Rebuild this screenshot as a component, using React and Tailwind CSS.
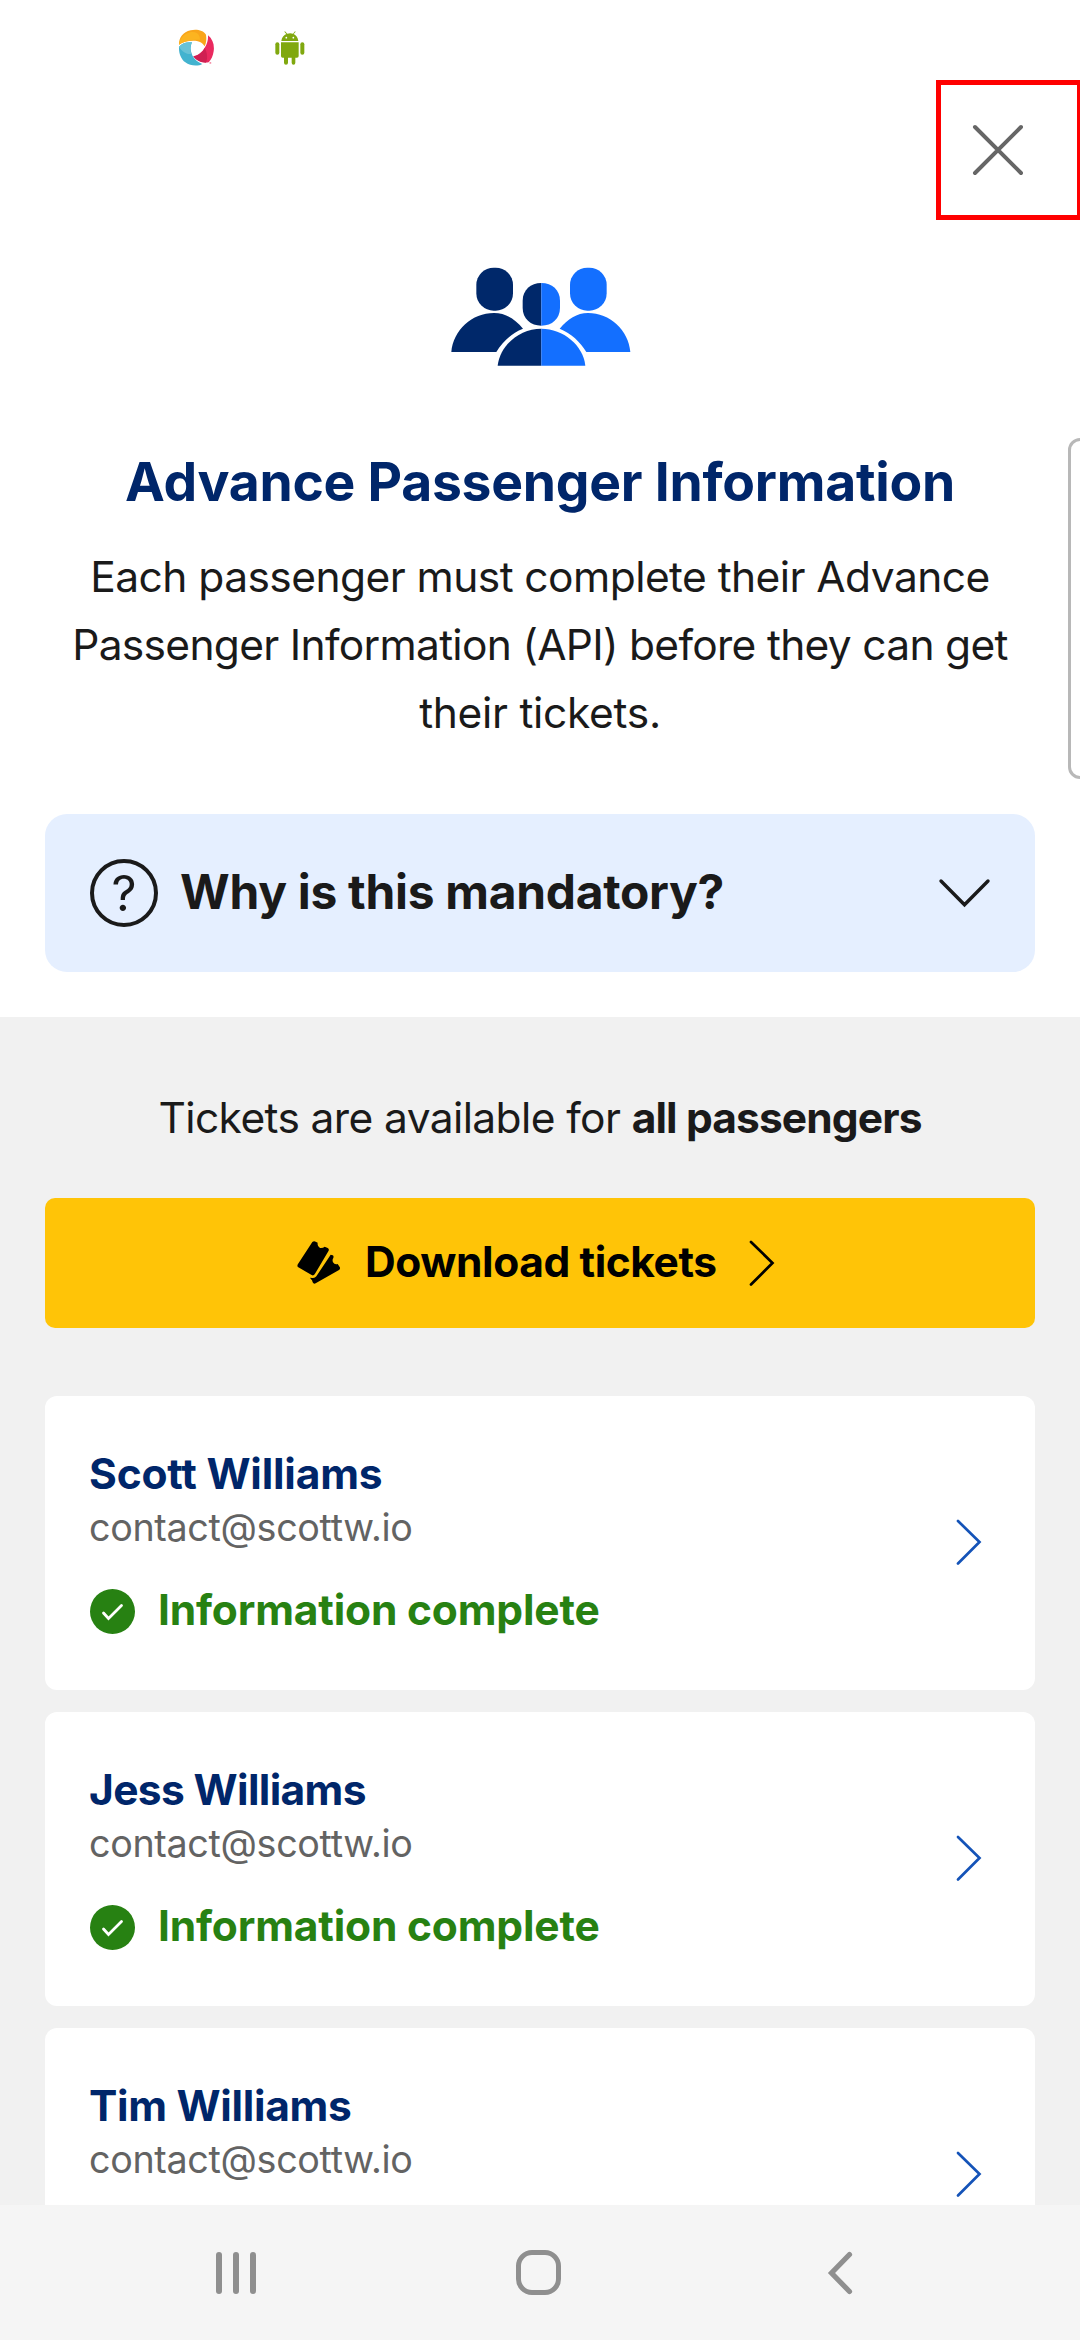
import React from "react";

const passengers = [
  { name: "Scott Williams", tracking: "tracking-[-0.19px]" },
  { name: "Jess Williams", tracking: "tracking-[-0.65px]" },
  { name: "Tim Williams", tracking: "tracking-[-0.3px]" },
];

function SwirlLogo() {
  return (
    <svg width="36" height="37" viewBox="84 57 108 111" className="shrink-0">
      <path d="M87 104C86 84 99 66 122 61C140 57 160 61 168 74C170 88 169 99 164 109C157 97 145 92 130 92C113 92 98 96 87 104Z" fill="#f9a51a" />
      <path d="M87 104C90 84 104 70 123 66C140 64 150 72 150 90C130 88 102 94 87 104Z" fill="#fcb420" />
      <path d="M174 76C188 87 194 105 191 124C189 138 184 149 176 157C158 160 140 153 130 139C145 137 158 125 165 112C172 100 175 88 174 76Z" fill="#ea2a5f" />
      <path d="M130 139C146 137 158 126 164 114C172 128 174 144 168 158C152 158 139 151 130 139Z" fill="#cf2052" />
      <path d="M87 110C97 99 111 95 126 97C120 110 121 124 128 138C134 149 144 157 157 162C144 170 120 168 106 157C93 147 86 130 87 110Z" fill="#43b3cf" />
      <path d="M87 110C97 99 111 95 126 97C119 110 120 121 125 132C111 134 97 126 87 110Z" fill="#68c2d6" />
      <path d="M179 155L185 159L179 162Z" fill="#f06a8a" />
    </svg>
  );
}

function AndroidLogo() {
  return (
    <svg width="30" height="35" viewBox="377 64 90 105" className="shrink-0" fill="#80a80f">
      <path d="M396 94C397 83 404 76 411 73L405 66L407 65L414 72C419 70 426 70 431 72L437 65L439 66L433 73C441 77 446 84 447 94Z" />
      <path d="M395 98H448V139Q448 144 443 144H438V159Q438 165 432.500 165Q427 165 427 159V144H416V159Q416 165 410 165Q404 165 404 159V144H400Q395 144 395 139Z" />
      <rect x="378" y="98" width="12" height="37" rx="6" />
      <rect x="453" y="98" width="12" height="37" rx="6" />
      <circle cx="411" cy="84" r="2.600" fill="#fff" />
      <circle cx="432" cy="84" r="2.600" fill="#fff" />
    </svg>
  );
}

function PeopleIcon() {
  return (
    <svg width="220" height="130" viewBox="0 0 660 390">
      <rect x="139" y="53" width="110" height="129" rx="52" fill="#00286a" />
      <path d="M64 306C70 240 126 189 192 189C226 189 255 206 279 236C244 250 218 275 199 306Z" fill="#00286a" />
      <rect x="420" y="53" width="110" height="129" rx="52" fill="#136fff" />
      <path d="M601 306C596 240 539 189 474 189C441 189 413 207 389 236C424 250 450 275 469 306Z" fill="#136fff" />
      <path d="M334 99C302 99 278 120 278 152V174C278 206 302 227 334 227Z" fill="#00286a" />
      <path d="M334 99C366 99 390 120 390 152V174C390 206 366 227 334 227Z" fill="#136fff" />
      <path d="M334 236C268 236 210 286 203 347H334Z" fill="#00286a" />
      <path d="M334 236C400 236 460 286 466 347H334Z" fill="#136fff" />
    </svg>
  );
}

function TicketIcon() {
  return (
    <svg width="44" height="44" viewBox="80 96 132 132" className="shrink-0">
      <path d="M126 99Q131 95 136 98L142 101Q140 112 149 117Q158 118 163 113L172 117Q178 120 174 127L133 196Q129 201 124 198L84 175Q79 171 83 165Z" />
      <path d="M181 137L187 139Q191 141 189 147Q185 152 188 160Q193 168 202 165L208 174Q211 179 206 183L136 223Q130 226 127 220L125 214Q121 210 119 206L126 207Q134 208 138 202Z" />
    </svg>
  );
}

function RightChevron({ className }) {
  return (
    <svg width="28" height="48" viewBox="0 0 28 48" fill="none" stroke="currentColor" strokeWidth="2.700" strokeLinecap="round" className={className}>
      <path d="M3 3L24.500 24L3 45.500" />
    </svg>
  );
}

function CheckBadge() {
  return (
    <svg width="45" height="45" viewBox="0 0 45 45" className="mt-0.5 shrink-0">
      <circle cx="22.500" cy="22.500" r="22.500" fill="#278112" />
      <path d="M13.500 24L18.500 29.500L31.500 16.500" fill="none" stroke="#fff" strokeWidth="2.800" strokeLinecap="round" />
    </svg>
  );
}

function PassengerCard({ name, tracking }) {
  return (
    <div className="flex h-[294px] shrink-0 items-start justify-between rounded-[12px] bg-white pl-[44px] pr-[52px] pt-[50px]">
      <div>
        <div className={"text-[42.5px] font-bold leading-[56px] text-[#00266a] " + tracking}>{name}</div>
        <div className="mt-[1px] text-[37.7px] leading-[48px] tracking-[-0.34px] text-[#636363]">contact@scottw.io</div>
        <div className="mt-[31px] flex h-[56px] items-center gap-[23px] pl-[1px]">
          <CheckBadge />
          <span className="text-[42.5px] font-bold leading-[56px] tracking-[-0.18px] text-[#278112]">Information complete</span>
        </div>
      </div>
      <RightChevron className="mt-[72px] text-[#1453b8]" />
    </div>
  );
}

export default function App() {
  return (
    <div className="relative flex h-[2340px] w-[1080px] flex-col overflow-hidden bg-white text-[#1a1a1a] [font-family:Inter,'Liberation_Sans',sans-serif]">
      <div className="flex h-[80px] shrink-0 items-start gap-[61px] pl-[178px] pt-[29px]">
        <SwirlLogo />
        <div className="pt-[2px]">
          <AndroidLogo />
        </div>
      </div>
      <div className="flex shrink-0 justify-end">
        <button className="flex h-[140px] w-[144px] items-center border-[5px] border-r-[3px] border-[#ff0000] pl-[31px]">
          <svg width="52" height="52" viewBox="0 0 52 52" fill="none" stroke="#666" strokeWidth="4" strokeLinecap="round">
            <path d="M3 3L49 49M49 3L3 49" />
          </svg>
        </button>
      </div>
      <div className="mt-[30px] flex shrink-0 justify-center">
        <PeopleIcon />
      </div>
      <h1 className="mt-[70px] shrink-0 whitespace-nowrap text-center text-[53.4px] font-bold leading-[64px] tracking-[-0.25px] text-[#00266a]">Advance Passenger Information</h1>
      <p className="mt-[29px] shrink-0 whitespace-nowrap text-center text-[42.5px] leading-[68px]">
        <span className="tracking-[-0.56px]">Each passenger must complete their Advance</span>
        <br />
        <span className="tracking-[-0.7px]">Passenger Information (API) before they can get</span>
        <br />
        <span className="tracking-[-0.3px]">their tickets.</span>
      </p>
      <div className="mx-[45px] mt-[67px] flex h-[158px] shrink-0 items-center rounded-[22px] bg-[#e5efff] pl-[45px] pr-[44px]">
        <div className="flex h-[68px] w-[68px] items-center justify-center rounded-full border-[4px] border-[#1a1a1a] text-[49px] leading-none">?</div>
        <span className="mb-[2px] ml-[22px] text-[47.9px] font-bold leading-[60px] tracking-[-0.28px]">Why is this mandatory?</span>
        <svg width="53" height="30" viewBox="0 0 53 30" fill="none" stroke="#1a1a1a" strokeWidth="3.400" strokeLinecap="round" className="ml-auto">
          <path d="M3 3L26.500 26.800L50 3" />
        </svg>
      </div>
      <div className="mt-[45px] flex min-h-0 flex-1 flex-col overflow-hidden bg-[#f1f1f1] px-[45px] pt-[67px]">
        <div className="shrink-0 text-center text-[42.5px] leading-[68px] tracking-[-0.61px]">
          Tickets are available for <b className="font-bold tracking-[-0.89px]">all passengers</b>
        </div>
        <button className="mt-[46px] flex h-[130px] shrink-0 items-center rounded-[10px] bg-[#ffc407] pl-[252px] text-black">
          <TicketIcon />
          <span className="mb-[2px] ml-[24px] text-[42.5px] font-bold leading-[56px] tracking-[-0.42px]">Download tickets</span>
          <RightChevron className="ml-[31px]" />
        </button>
        <div className="mt-[68px] flex flex-col gap-[22px]">
          {passengers.map((p) => (
            <PassengerCard key={p.name} {...p} />
          ))}
        </div>
      </div>
      <nav className="flex h-[135px] shrink-0 items-center bg-[#f5f5f5] pl-[85px]">
        <div className="flex w-[302px] justify-center gap-[11px]">
          <i className="h-[42px] w-[6px] rounded-[3px] bg-[#8f8f8f]" />
          <i className="h-[42px] w-[6px] rounded-[3px] bg-[#8f8f8f]" />
          <i className="h-[42px] w-[6px] rounded-[3px] bg-[#8f8f8f]" />
        </div>
        <div className="flex w-[302px] justify-center">
          <i className="h-[45px] w-[45px] rounded-[16px] border-[5.5px] border-[#8f8f8f]" />
        </div>
        <div className="flex w-[302px] justify-center">
          <svg width="26" height="46" viewBox="0 0 26 46" fill="none" stroke="#8f8f8f" strokeWidth="5.200" strokeLinecap="round">
            <path d="M22.500 4.500L4.500 23L22.500 41.500" />
          </svg>
        </div>
      </nav>
      {/* Edge panel handle, partly off screen */}
      <div className="absolute -right-[20px] top-[438px] h-[341px] w-[32px] rounded-[12px] border-[3px] border-[#b8b8b8] bg-white" />
    </div>
  );
}
